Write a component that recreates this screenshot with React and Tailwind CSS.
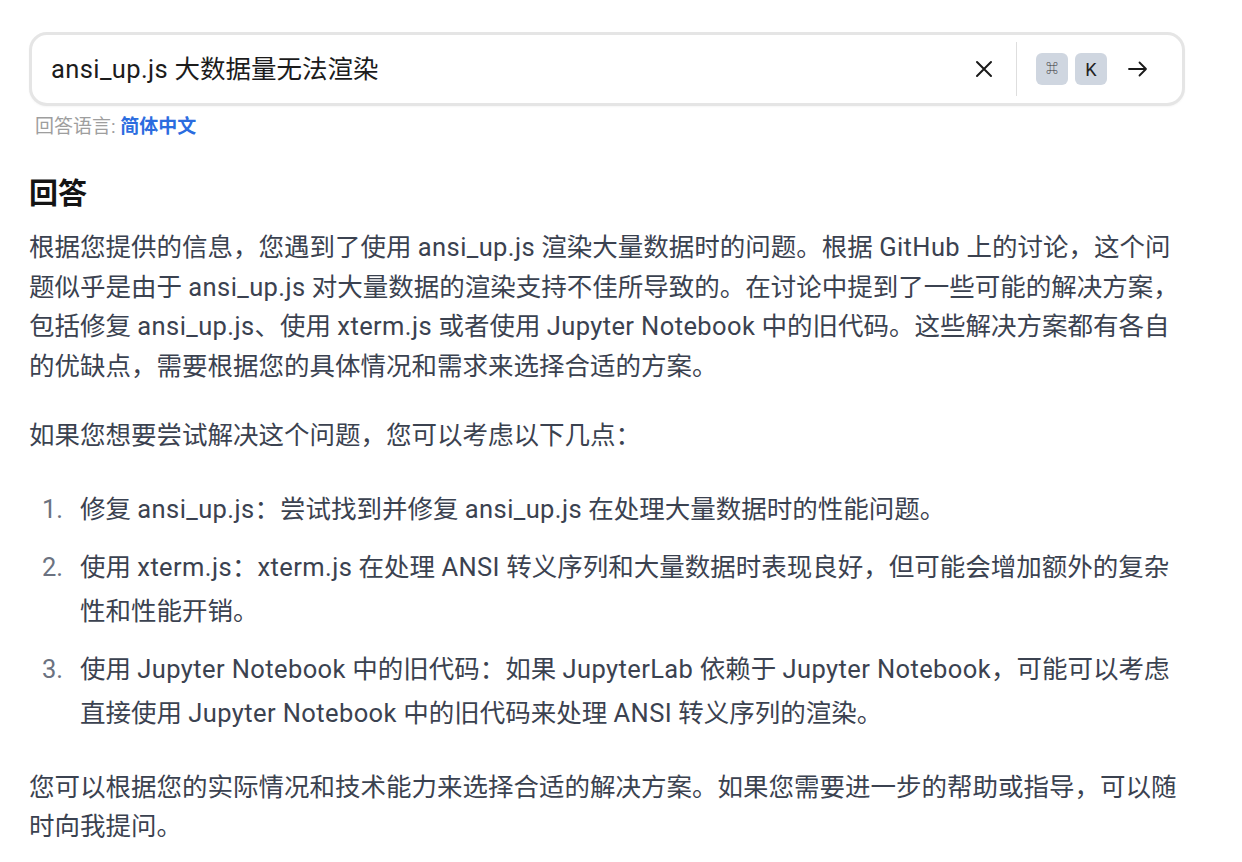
import React from "react";

const font = { fontFamily: '"Roboto", "Noto Sans CJK SC", sans-serif' };

function T({ children }) {
  const parts = String(children).split(/([A-Za-z0-9_.]+(?:[ .][A-Za-z0-9_.]+)*)/);
  return (
    <>
      {parts.map((p, i) =>
        i % 2 === 1 ? (
          <span key={i} className="tracking-[0.4px]">
            {p}
          </span>
        ) : (
          <React.Fragment key={i}>{p}</React.Fragment>
        )
      )}
    </>
  );
}

function XIcon() {
  return (
    <svg width="18" height="18" viewBox="0 0 18 18" fill="none" stroke="#1a1a1a" strokeWidth="2" strokeLinecap="round">
      <path d="M2 2 L16 16 M16 2 L2 16" />
    </svg>
  );
}

function ArrowIcon() {
  return (
    <svg width="20" height="16" viewBox="0 0 20 16" fill="none" stroke="#1a1a1a" strokeWidth="1.8" strokeLinecap="round" strokeLinejoin="round">
      <path d="M1 8 H18 M11.5 1.5 L18 8 L11.5 14.5" />
    </svg>
  );
}

function Num({ n }) {
  return <span className="w-[51px] shrink-0 pl-[13px] text-[#6b7280]">{n}.</span>;
}

export default function App() {
  return (
    <div className="min-h-[862px] bg-white pt-[32px] pl-[29px]" style={font}>
      {/* search box */}
      <div className="flex h-[74px] w-[1156px] items-center rounded-[18px] border-[3px] border-[#e5e5e5] bg-white pl-[19px] pr-[34px] shadow-[0_1px_2px_rgba(0,0,0,0.04)]">
        <div className="flex-1 text-[25.5px] text-[#1c1c1c] whitespace-nowrap">
          <T>ansi_up.js 大数据量无法渲染</T>
        </div>
        <div className="flex items-center">
          <XIcon />
          <div className="ml-[23px] h-[54px] w-px bg-[#dedede]" />
          <div className="ml-[19px] flex h-[32px] w-[32px] items-center justify-center rounded-[6px] bg-[#cfd6e0] text-[12px] text-[#333]">⌘</div>
          <div className="ml-[7px] flex h-[32px] w-[32px] items-center justify-center rounded-[6px] bg-[#cfd6e0] text-[18px] text-[#222]">K</div>
          <div className="ml-[21px] flex items-center">
            <ArrowIcon />
          </div>
        </div>
      </div>

      {/* language */}
      <div className="mt-[9px] ml-[6px] text-[19px] leading-[24px] text-[#9e9e9e] whitespace-nowrap">
        回答语言: <span className="font-bold text-[#2b6cdf]">简体中文</span>
      </div>

      {/* answer */}
      <div className="w-[1160px] text-[25.5px] text-[#3b4250]">
        <h2 className="mt-[37px] text-[29px] font-bold leading-[36px] text-[#141414]">回答</h2>

        <div className="mt-[16px] leading-[39.5px] whitespace-nowrap">
          <div><T>根据您提供的信息，您遇到了使用 ansi_up.js 渲染大量数据时的问题。根据 GitHub 上的讨论，这个问</T></div>
          <div><T>题似乎是由于 ansi_up.js 对大量数据的渲染支持不佳所导致的。在讨论中提到了一些可能的解决方案，</T></div>
          <div><T>包括修复 ansi_up.js、使用 xterm.js 或者使用 Jupyter Notebook 中的旧代码。这些解决方案都有各自</T></div>
          <div>的优缺点，需要根据您的具体情况和需求来选择合适的方案。</div>
        </div>

        <div className="mt-[30px] leading-[39.5px] whitespace-nowrap">如果您想要尝试解决这个问题，您可以考虑以下几点：</div>

        <div className="mt-[31px] flex flex-col gap-[14px] leading-[44px] whitespace-nowrap">
          <div className="flex">
            <Num n={1} />
            <div><T>修复 ansi_up.js：尝试找到并修复 ansi_up.js 在处理大量数据时的性能问题。</T></div>
          </div>
          <div className="flex">
            <Num n={2} />
            <div>
              <div><T>使用 xterm.js：xterm.js 在处理 ANSI 转义序列和大量数据时表现良好，但可能会增加额外的复杂</T></div>
              <div>性和性能开销。</div>
            </div>
          </div>
          <div className="flex">
            <Num n={3} />
            <div>
              <div><T>使用 Jupyter Notebook 中的旧代码：如果 JupyterLab 依赖于 Jupyter Notebook，可能可以考虑</T></div>
              <div><T>直接使用 Jupyter Notebook 中的旧代码来处理 ANSI 转义序列的渲染。</T></div>
            </div>
          </div>
        </div>

        <div className="mt-[33px] leading-[39.5px] whitespace-nowrap">
          <div>您可以根据您的实际情况和技术能力来选择合适的解决方案。如果您需要进一步的帮助或指导，可以随</div>
          <div>时向我提问。</div>
        </div>
      </div>
    </div>
  );
}
